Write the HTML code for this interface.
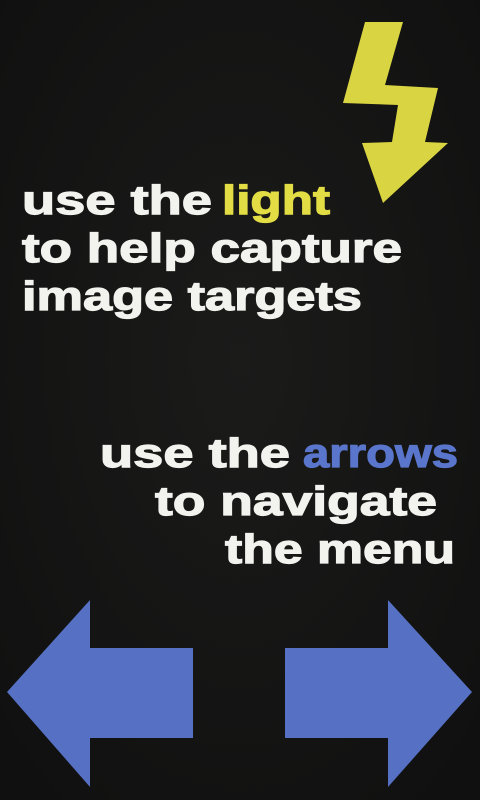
<!DOCTYPE html>
<html><head><meta charset="utf-8"><style>
html,body{margin:0;padding:0;background:#141414;}
svg{display:block}
text{font-family:"Liberation Sans",sans-serif;font-weight:bold;font-size:41px;stroke-width:1.2px;}
</style></head><body>
<svg width="480" height="800" viewBox="0 0 480 800" xmlns="http://www.w3.org/2000/svg">
<defs>
<radialGradient id="bg" cx="50%" cy="45%" r="70%">
<stop offset="0" stop-color="#1b1b1a"/><stop offset="1" stop-color="#101010"/>
</radialGradient>
</defs>
<rect width="480" height="800" fill="url(#bg)"/>
<polygon fill="#d9d442" points="365,22 403,22 385,85 438,88 425,142 448,143 383,203 362,143 392,142 398,105 343,103"/>
<g fill="#f2f2ee" stroke="#f2f2ee">
<text x="22" y="214" textLength="190" lengthAdjust="spacingAndGlyphs">use the</text>
<text x="222" y="214" textLength="108" lengthAdjust="spacingAndGlyphs" fill="#e3dd45" stroke="#e3dd45">light</text>
<text x="22" y="262" textLength="380" lengthAdjust="spacingAndGlyphs">to help capture</text>
<text x="22" y="310" textLength="340" lengthAdjust="spacingAndGlyphs">image targets</text>
<text x="100" y="467" textLength="190" lengthAdjust="spacingAndGlyphs">use the</text>
<text x="303" y="467" textLength="155" lengthAdjust="spacingAndGlyphs" fill="#5a76cc" stroke="#5a76cc">arrows</text>
<text x="155" y="515" textLength="282" lengthAdjust="spacingAndGlyphs">to navigate</text>
<text x="225" y="563" textLength="230" lengthAdjust="spacingAndGlyphs">the menu</text>
</g>
<g fill="#5670c4">
<polygon points="7,692 90,600 90,648 193,648 193,738 90,738 90,787"/>
<polygon points="472,692 388,600 388,648 285,648 285,738 388,738 388,787"/>
</g>
</svg>
</body></html>
